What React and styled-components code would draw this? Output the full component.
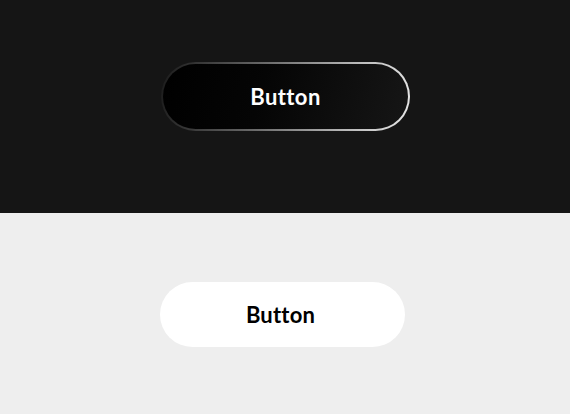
import React from "react";
import styled, { createGlobalStyle } from "styled-components";

const Global = createGlobalStyle`
  html, body { margin: 0; padding: 0; }
  body { font-family: "Lato", "Inter", sans-serif; }
`;

const Page = styled.div`
  display: flex;
  flex-direction: column;
  width: 570px;
  height: 414px;
`;

const Section = styled.section`
  display: flex;
  justify-content: center;
  align-items: ${(p) => (p.$top ? "flex-start" : "center")};
  box-sizing: border-box;
  height: ${(p) => p.$h}px;
  padding-top: ${(p) => p.$pt || 0}px;
  background: ${(p) => p.$bg};
`;

const GlowButton = styled.button`
  box-sizing: border-box;
  width: 249px;
  height: 69px;
  margin-left: 1px;
  border-radius: 35px;
  border: 2px solid transparent;
  background:
    linear-gradient(105deg, #000 0%, #050505 40%, #161616 100%) padding-box,
    linear-gradient(100deg, #1a1a1a 0%, #6a6a6a 40%, #b8b8b8 75%, #e8e8e8 100%) border-box;
  color: #fff;
  font-family: "Lato", sans-serif;
  font-weight: 700;
  font-size: 22px;
  letter-spacing: 0.4px;
  padding: 0 0 1px 0;
  cursor: pointer;
`;

const PlainButton = styled.button`
  box-sizing: border-box;
  width: 245px;
  height: 65px;
  margin: 2px 6px 0 0;
  border-radius: 33px;
  border: none;
  background: #fff;
  color: #000;
  font-family: "Lato", sans-serif;
  font-weight: 700;
  font-size: 22px;
  letter-spacing: 0.2px;
  padding: 0 3px 0 0;
  cursor: pointer;
`;

export default function App() {
  return (
    <>
      <Global />
      <Page>
        <Section $h={213} $bg="#151515" $top $pt={62}>
          <GlowButton>Button</GlowButton>
        </Section>
        <Section $h={201} $bg="#eeeeee">
          <PlainButton>Button</PlainButton>
        </Section>
      </Page>
    </>
  );
}
